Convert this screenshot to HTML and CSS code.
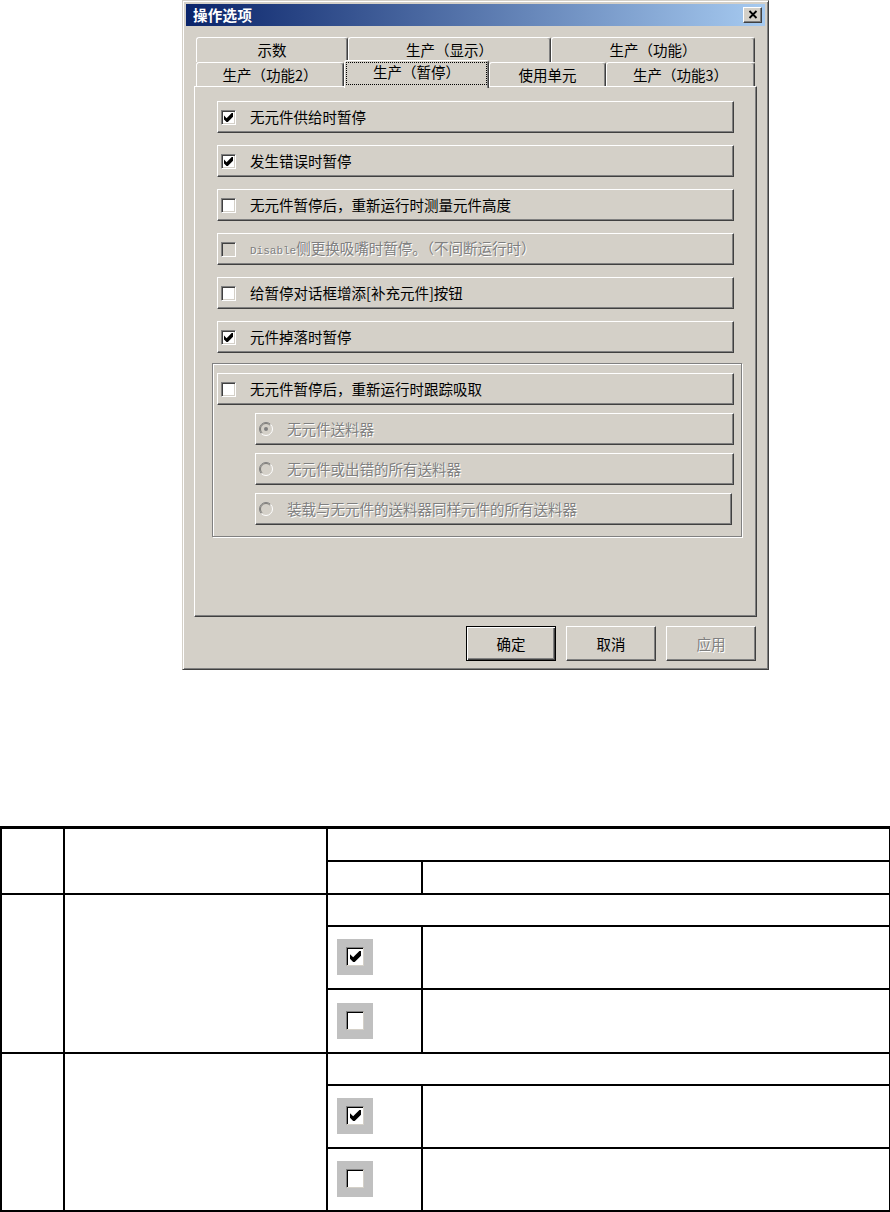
FILE: index.html
```html
<!DOCTYPE html>
<html lang="zh-CN">
<head>
<meta charset="utf-8">
<title>操作选项</title>
<link rel="stylesheet" href="styles.css">
</head>
<body>
<div class="dialog">
  <div class="titlebar">
    <span class="title">操作选项</span>
    <span class="close"><svg width="10" height="9" viewBox="0 0 10 9"><path d="M1.5 1 L8.5 8 M8.5 1 L1.5 8" stroke="#000" stroke-width="1.8" fill="none"/></svg></span>
  </div>
  <div class="dlg-body">
    <div class="tabs">
      <div class="tab-row back">
        <div class="tab w152">示数</div>
        <div class="tab w203">生产（显示）</div>
        <div class="tab w204">生产（功能）</div>
      </div>
      <div class="tab-row front">
        <div class="tab w148">生产（功能2）</div>
        <div class="tab active w145"><span class="focus">生产（暂停）</span></div>
        <div class="tab w117">使用单元</div>
        <div class="tab w149">生产（功能3）</div>
      </div>
    </div>
    <div class="panel">
      <div class="opt"><span class="cb"><svg width="9" height="9" viewBox="0 0 7 7"><polygon points="0,2 2,4 6,0 7,0 7,3 3,7 2,7 0,5" fill="#000"/></svg></span><span>无元件供给时暂停</span></div>
      <div class="opt"><span class="cb"><svg width="9" height="9" viewBox="0 0 7 7"><polygon points="0,2 2,4 6,0 7,0 7,3 3,7 2,7 0,5" fill="#000"/></svg></span><span>发生错误时暂停</span></div>
      <div class="opt"><span class="cb"></span><span>无元件暂停后，重新运行时测量元件高度</span></div>
      <div class="opt disabled"><span class="cb"></span><span><span class="mono">Disable</span>侧更换吸嘴时暂停。（不间断运行时）</span></div>
      <div class="opt"><span class="cb"></span><span>给暂停对话框增添[补充元件]按钮</span></div>
      <div class="opt"><span class="cb"><svg width="9" height="9" viewBox="0 0 7 7"><polygon points="0,2 2,4 6,0 7,0 7,3 3,7 2,7 0,5" fill="#000"/></svg></span><span>元件掉落时暂停</span></div>
      <div class="group">
        <div class="opt"><span class="cb"></span><span>无元件暂停后，重新运行时跟踪吸取</span></div>
        <div class="opt sub disabled"><span class="radio"><svg width="14" height="14" viewBox="0 0 14 14"><circle cx="7" cy="7" r="6" fill="#d4d0c8"/><path d="M11.6 2.4 A6.5 6.5 0 0 0 2.4 11.6" stroke="#808080" fill="none"/><path d="M2.4 11.6 A6.5 6.5 0 0 0 11.6 2.4" stroke="#fff" fill="none"/><path d="M10.9 3.1 A5.5 5.5 0 0 0 3.1 10.9" stroke="#404040" fill="none" opacity="0.55"/><circle cx="7" cy="7" r="2" fill="#808080"/></svg></span><span>无元件送料器</span></div>
        <div class="opt sub disabled"><span class="radio"><svg width="14" height="14" viewBox="0 0 14 14"><circle cx="7" cy="7" r="6" fill="#d4d0c8"/><path d="M11.6 2.4 A6.5 6.5 0 0 0 2.4 11.6" stroke="#808080" fill="none"/><path d="M2.4 11.6 A6.5 6.5 0 0 0 11.6 2.4" stroke="#fff" fill="none"/><path d="M10.9 3.1 A5.5 5.5 0 0 0 3.1 10.9" stroke="#404040" fill="none" opacity="0.55"/></svg></span><span>无元件或出错的所有送料器</span></div>
        <div class="opt sub disabled last"><span class="radio"><svg width="14" height="14" viewBox="0 0 14 14"><circle cx="7" cy="7" r="6" fill="#d4d0c8"/><path d="M11.6 2.4 A6.5 6.5 0 0 0 2.4 11.6" stroke="#808080" fill="none"/><path d="M2.4 11.6 A6.5 6.5 0 0 0 11.6 2.4" stroke="#fff" fill="none"/><path d="M10.9 3.1 A5.5 5.5 0 0 0 3.1 10.9" stroke="#404040" fill="none" opacity="0.55"/></svg></span><span>装载与无元件的送料器同样元件的所有送料器</span></div>
      </div>
    </div>
    <div class="buttons">
      <div class="btn default">确定</div>
      <div class="btn">取消</div>
      <div class="btn disabled">应用</div>
    </div>
  </div>
</div>

<table class="spec">
  <colgroup><col class="c1"><col class="c2"><col class="c3"><col class="c4"></colgroup>
  <tr class="h33"><td rowspan="2"></td><td rowspan="2"></td><td colspan="2"></td></tr>
  <tr class="h33"><td></td><td></td></tr>
  <tr class="h32"><td rowspan="3"></td><td rowspan="3"></td><td colspan="2"></td></tr>
  <tr class="h63"><td class="imgcell"><span class="cbimg"><span class="cb big"><svg width="11" height="11" viewBox="0 0 7 7"><polygon points="0,2 2,4 6,0 7,0 7,3 3,7 2,7 0,5" fill="#000"/></svg></span></span></td><td></td></tr>
  <tr class="h64"><td class="imgcell"><span class="cbimg"><span class="cb big"></span></span></td><td></td></tr>
  <tr class="h32"><td rowspan="3"></td><td rowspan="3"></td><td colspan="2"></td></tr>
  <tr class="h63"><td class="imgcell"><span class="cbimg"><span class="cb big"><svg width="11" height="11" viewBox="0 0 7 7"><polygon points="0,2 2,4 6,0 7,0 7,3 3,7 2,7 0,5" fill="#000"/></svg></span></span></td><td></td></tr>
  <tr class="h63"><td class="imgcell"><span class="cbimg"><span class="cb big"></span></span></td><td></td></tr>
</table>
</body>
</html>
```
FILE: styles.css
```css
* { box-sizing: border-box; }

body {
  margin: 0;
  background: #fff;
  color: #000;
  font-family: "Noto Sans CJK SC", "Noto Sans", sans-serif;
  font-size: 14.5px;
  line-height: 16px;
}

/* ---------- dialog window ---------- */
.dialog {
  margin-left: 182px;
  width: 587px;
  background: #d4d0c8;
  border: 1px solid;
  border-color: #d4d0c8 #404040 #404040 #d4d0c8;
  box-shadow: inset 1px 1px #fff, inset -1px -1px #808080;
  padding: 3px 3px 8px;
}

.titlebar {
  height: 22px;
  display: flex;
  align-items: center;
  justify-content: space-between;
  padding: 0 3px 0 7px;
  background: linear-gradient(to right, #0a246a, #a6caf0);
}

.title {
  color: #fff;
  font-weight: bold;
  font-size: 14.5px;
  letter-spacing: 0.3px;
}

.close {
  width: 19px;
  height: 16px;
  display: flex;
  align-items: center;
  justify-content: center;
  background: #d4d0c8;
  border: 1px solid;
  border-color: #fff #404040 #404040 #fff;
  box-shadow: inset -1px -1px #808080;
  margin-top: -1px;
}

.dlg-body {
  padding: 11px 8px 0;
}

/* ---------- tabs ---------- */
.tabs { padding: 0 2px; }

.tab-row {
  display: flex;
  align-items: flex-start;
}

.back { height: 25px; }
.front { height: 24px; position: relative; z-index: 1; }

.tab {
  display: flex;
  align-items: center;
  justify-content: center;
  background: #d4d0c8;
  border: 1px solid;
  border-bottom: none;
  border-color: #fff #404040 transparent #fff;
  border-radius: 3px 3px 0 0;
  box-shadow: inset -1px 0 #808080;
  white-space: nowrap;
}

.back .tab { height: 25px; padding-bottom: 1px; }
.front .tab { height: 24px; }

.w152 { width: 152px; }
.w203 { width: 203px; }
.w204 { width: 204px; }
.w148 { width: 148px; }
.w145 { width: 145px; }
.w117 { width: 117px; }
.w149 { width: 149px; }

.tab.active {
  margin-top: -2px;
  height: 28px;
  align-items: stretch;
  padding: 2px 2px 4px;
}

.focus {
  flex: 1;
  display: flex;
  justify-content: center;
  align-items: flex-start;
  padding-top: 1px;
  outline: 1px dotted #000;
}

/* ---------- tab page ---------- */
.panel {
  height: 531px;
  display: flex;
  flex-direction: column;
  gap: 12px;
  padding: 14px 22px 0;
  border: 1px solid;
  border-color: #fff #404040 #404040 #fff;
  box-shadow: inset -1px -1px #808080;
}

.opt {
  height: 32px;
  flex: none;
  display: flex;
  align-items: center;
  padding-left: 3px;
  border: 1px solid;
  border-color: #fff #404040 #404040 #fff;
  box-shadow: inset -1px -1px #808080;
  white-space: nowrap;
}

.cb {
  width: 15px;
  height: 15px;
  flex: none;
  display: flex;
  align-items: center;
  justify-content: center;
  margin-right: 14px;
  background: #fff;
  border: 1px solid;
  border-color: #808080 #fff #fff #808080;
  box-shadow: inset 1px 1px #404040, inset -1px -1px #d4d0c8;
}

.disabled { color: #808080; text-shadow: 1px 1px 0 #fff; }
.disabled .cb { background: #d4d0c8; }

.mono {
  font-family: "Liberation Mono", "DejaVu Sans Mono", monospace;
  font-size: 11px;
}

.group {
  margin: -2px -8px 0 -5px;
  display: flex;
  flex-direction: column;
  gap: 8px;
  padding: 9px 7px 11px 4px;
  border: 1px solid #808080;
  box-shadow: inset 1px 1px #fff, 1px 1px #fff;
}

.opt.sub { margin-left: 38px; }
.opt.last { margin-right: 2px; }

.radio {
  width: 14px;
  height: 14px;
  flex: none;
  display: flex;
  margin-right: 14px;
}

/* ---------- buttons ---------- */
.buttons {
  display: flex;
  justify-content: flex-end;
  gap: 10px;
  margin-top: 9px;
  padding-right: 1px;
}

.btn {
  width: 90px;
  height: 35px;
  display: flex;
  align-items: center;
  justify-content: center;
  border: 1px solid;
  border-color: #fff #404040 #404040 #fff;
  box-shadow: inset -1px -1px #808080;
}

.btn.default {
  border-color: #000;
  box-shadow: inset 1px 1px #fff, inset -1px -1px #404040, inset -2px -2px #808080;
}

/* ---------- spec table ---------- */
.spec {
  margin-top: 156px;
  width: 889px;
  table-layout: fixed;
  border-collapse: collapse;
  border-top: 3px solid #000;
}

.spec td {
  border: 2px solid #000;
  padding: 0;
}

.c1 { width: 63px; }
.c2 { width: 263px; }
.c3 { width: 95px; }
.c4 { width: 468px; }

.h32 { height: 32px; }
.h33 { height: 33px; }
.h63 { height: 63px; }
.h64 { height: 64px; }

.imgcell { padding-left: 9px !important; }

.cbimg {
  display: block;
  width: 36px;
  height: 36px;
  background: #c0c0c0;
  padding: 8px 0 0 9px;
}

.cb.big {
  width: 18px;
  height: 19px;
  margin: 0;
  border-color: #808080 #d4d0c8 #d4d0c8 #808080;
  box-shadow: inset 1px 1px #000, inset -1px -1px #fff;
}
```
